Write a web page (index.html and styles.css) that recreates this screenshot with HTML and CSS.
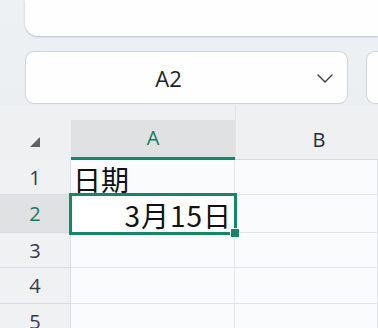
FILE: index.html
```html
<!DOCTYPE html>
<html>
<head>
<meta charset="utf-8">
<link rel="stylesheet" href="styles.css">
</head>
<body>
<div class="app">
  <div class="top-card"></div>
  <div class="namebar">
    <div class="namebox">
      <span class="ref">A2</span>
      <svg class="chev" width="16" height="9" viewBox="0 0 16 9"><path d="M1 1 L8 8 L15 1" fill="none" stroke="#3a3a44" stroke-width="1.4" stroke-linecap="round" stroke-linejoin="round"/></svg>
    </div>
    <div class="fxbox"></div>
  </div>
  <div class="sheet">
    <div class="corner"><svg width="12" height="12" viewBox="0 0 12 12"><path d="M11 1 L11 11 L1 11 Z" fill="#606068"/></svg></div>
    <div class="colhead sel"><span>A</span></div>
    <div class="colhead colb"><span>B</span></div>

    <div class="rowhead">1</div>
    <div class="cell">日期</div>
    <div class="cell"></div>

    <div class="rowhead sel">2</div>
    <div class="cell active"><span>3月15日</span><i class="handle"></i></div>
    <div class="cell"></div>

    <div class="rowhead">3</div>
    <div class="cell"></div>
    <div class="cell"></div>

    <div class="rowhead">4</div>
    <div class="cell"></div>
    <div class="cell"></div>

    <div class="rowhead">5</div>
    <div class="cell"></div>
    <div class="cell"></div>
  </div>
</div>
</body>
</html>
```

FILE: styles.css
```css
html, body {
  margin: 0;
  padding: 0;
}
body {
  width: 378px;
  height: 328px;
  overflow: hidden;
  background: linear-gradient(180deg, #eef1f4 0%, #e4e9ee 100%);
  font-family: "Noto Sans", "Noto Sans CJK SC", sans-serif;
}
.app {
  display: flex;
  flex-direction: column;
}
.top-card {
  margin-left: 25px;
  height: 36px;
  background: #fefefe;
  border-radius: 0 0 0 13px;
  box-shadow: 0 1px 2px rgba(120, 135, 150, 0.45);
}
.namebar {
  display: flex;
  gap: 18px;
  padding: 15px 0 0 25px;
  height: 53px;
}
.namebox {
  flex: 0 0 323px;
  box-sizing: border-box;
  height: 53px;
  background: #fefefe;
  border: 1px solid #cfd4da;
  border-radius: 9px;
  position: relative;
  display: flex;
  align-items: center;
  justify-content: center;
}
.ref {
  font-family: "Open Sans", "Noto Sans", sans-serif;
  font-size: 22px;
  color: #1e1e26;
  margin-right: 36px;
  margin-top: 1px;
}
.chev {
  position: absolute;
  right: 14px;
  top: 22px;
}
.fxbox {
  flex: 1;
  height: 53px;
  box-sizing: border-box;
  background: #fefefe;
  border: 1px solid #cfd4da;
  border-right: none;
  border-radius: 9px 0 0 9px;
}
.sheet {
  margin-top: 1px;
  display: grid;
  grid-template-columns: 71px 164px 1fr;
  grid-template-rows: 55px 35px 38px 35px 36px 36px;
  background: #fafbfc;
}
.corner {
  background: #eff0f1;
  display: flex;
  align-items: flex-start;
  justify-content: center;
  padding-top: 31px;
  box-sizing: border-box;
  padding-right: 2px;
}
.colhead {
  background: #eff0f1;
  display: flex;
  flex-direction: column;
  justify-content: flex-end;
  border-bottom: 1px solid #d6d8da;
  box-sizing: border-box;
  font-family: "Open Sans", "Noto Sans", sans-serif;
  font-size: 20px;
  color: #2a2a3a;
}
.colhead span {
  height: 37px;
  display: flex;
  align-items: center;
  justify-content: center;
  padding-bottom: 2px;
  box-sizing: border-box;
}
.colhead.sel {
  border-bottom: 3px solid #14876a;
  color: #167a62;
}
.colhead.sel span {
  background: #e0e1e2;
  height: 37px;
}
.colhead.colb {
  border-left: 1px solid #e2e3e5;
}
.colhead.colb span {
  padding-left: 24px;
}
.rowhead {
  background: #f0f1f2;
  border-bottom: 1px solid #dcdde0;
  border-right: 1px solid #dcdde0;
  display: flex;
  align-items: center;
  justify-content: center;
  font-family: "Open Sans", "Noto Sans", sans-serif;
  font-size: 20px;
  color: #3a3848;
  box-sizing: border-box;
}
.rowhead.sel {
  background: #e0e1e2;
  color: #167a62;
}
.cell {
  border-bottom: 1px solid #e3e5e8;
  border-right: 1px solid #e3e5e8;
  box-sizing: border-box;
  font-family: "Noto Sans CJK SC", sans-serif;
  font-size: 28px;
  color: #111;
  display: flex;
  align-items: center;
  padding-left: 2px;
  padding-top: 3px;
  line-height: 1;
  white-space: nowrap;
}
.cell.active {
  position: relative;
  justify-content: flex-end;
  padding-right: 2px;
  padding-top: 2px;
  z-index: 1;
  outline: 3px solid #14876a;
  outline-offset: -1px;
  background: #fff;
  letter-spacing: 1px;
}
.handle {
  position: absolute;
  right: -6px;
  bottom: -6px;
  width: 8px;
  height: 8px;
  background: #14876a;
  border: 1px solid #fff;
  border-radius: 1px;
}
```
